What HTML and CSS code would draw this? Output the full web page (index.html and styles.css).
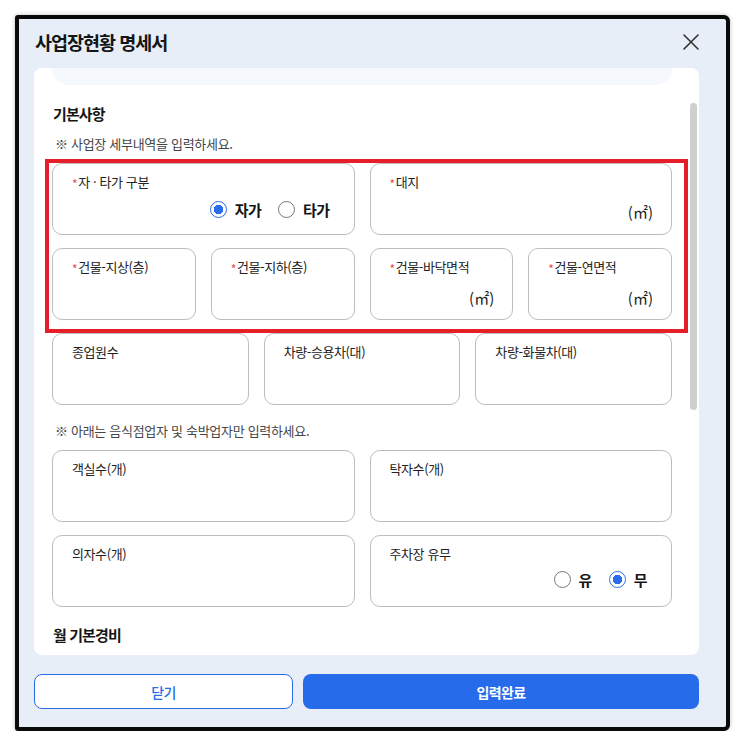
FILE: index.html
```html
<!DOCTYPE html>
<html lang="ko">
<head>
<meta charset="utf-8">
<title>사업장현황 명세서</title>
<link rel="stylesheet" href="styles.css">
</head>
<body>
<div class="frame">
  <header class="dialog-head">
    <h1 class="dialog-title">사업장현황 명세서</h1>
    <button class="close" type="button" aria-label="닫기">
      <svg width="16" height="16" viewBox="0 0 16 16"><path d="M1 1 L15 15 M15 1 L1 15" stroke="#333" stroke-width="1.6" stroke-linecap="round" fill="none"/></svg>
    </button>
  </header>

  <main class="panel">
    <div class="scroll">
      <div class="prev-card"></div>

      <h2 class="section-title">기본사항</h2>
      <p class="hint">※ 사업장 세부내역을 입력하세요.</p>

      <div class="row cols-2">
        <div class="field">
          <div class="label"><span class="req">*</span>자 · 타가 구분</div>
          <div class="value radios">
            <label class="radio"><span class="dot on"></span>자가</label>
            <label class="radio"><span class="dot"></span>타가</label>
          </div>
        </div>
        <div class="field">
          <div class="label"><span class="req">*</span>대지</div>
          <div class="value unit">(㎡)</div>
        </div>
      </div>

      <div class="row cols-4">
        <div class="field"><div class="label"><span class="req">*</span>건물-지상(층)</div></div>
        <div class="field"><div class="label"><span class="req">*</span>건물-지하(층)</div></div>
        <div class="field">
          <div class="label"><span class="req">*</span>건물-바닥면적</div>
          <div class="value unit low">(㎡)</div>
        </div>
        <div class="field">
          <div class="label"><span class="req">*</span>건물-연면적</div>
          <div class="value unit low">(㎡)</div>
        </div>
      </div>

      <div class="row cols-3">
        <div class="field"><div class="label">종업원수</div></div>
        <div class="field"><div class="label">차량-승용차(대)</div></div>
        <div class="field"><div class="label">차량-화물차(대)</div></div>
      </div>

      <p class="hint hint-mid">※ 아래는 음식점업자 및 숙박업자만 입력하세요.</p>

      <div class="row cols-2">
        <div class="field"><div class="label">객실수(개)</div></div>
        <div class="field"><div class="label">탁자수(개)</div></div>
      </div>

      <div class="row cols-2">
        <div class="field"><div class="label">의자수(개)</div></div>
        <div class="field">
          <div class="label">주차장 유무</div>
          <div class="value radios">
            <label class="radio"><span class="dot"></span>유</label>
            <label class="radio"><span class="dot on"></span>무</label>
          </div>
        </div>
      </div>

      <h2 class="section-title section-next">월 기본경비</h2>
    </div>

    <div class="scrollbar"></div>
    <div class="highlight"></div>
  </main>

  <footer class="actions">
    <button class="btn btn-outline" type="button">닫기</button>
    <button class="btn btn-primary" type="button">입력완료</button>
  </footer>
</div>
</body>
</html>
```

FILE: styles.css
```css
* { box-sizing: border-box; }

html, body {
  margin: 0;
  padding: 0;
  background: #ffffff;
}

body {
  font-family: "Noto Sans CJK KR", "Noto Sans", sans-serif;
  color: #1a1a1a;
}

/* dialog window */
.frame {
  margin: 15px 0 0 15px;
  width: 715px;
  height: 716px;
  border: 4px solid #0a0a0a;
  border-radius: 3px 6px 6px 3px;
  background: #e7eef8;
  padding: 0 27px 0 15px;
  display: flex;
  flex-direction: column;
  box-shadow: 0 0 4px rgba(0, 0, 0, 0.25);
}

.dialog-head {
  height: 49px;
  display: flex;
  align-items: center;
  justify-content: space-between;
  padding: 0 0 3px 1px;
}

.dialog-title {
  margin: 0;
  font-size: 18.5px;
  font-weight: 700;
  letter-spacing: -1px;
  color: #151515;
}

.close {
  border: 0;
  background: none;
  padding: 0;
  width: 16px;
  height: 16px;
  display: flex;
}

/* white scroll panel */
.panel {
  position: relative;
  height: 587px;
  background: #ffffff;
  border-radius: 8px;
  overflow: hidden;
}

.scroll {
  padding: 0 27px 0 18px;
}

.prev-card {
  height: 17px;
  background: #f5f8fd;
  border-radius: 0 0 16px 16px;
}

.section-title {
  margin: 19px 0 0 1px;
  font-size: 15px;
  line-height: 20px;
  font-weight: 700;
  letter-spacing: -0.9px;
  color: #151515;
}

.section-next {
  margin-top: 18px;
}

.hint {
  margin: 11px 0 0 3px;
  font-size: 13px;
  line-height: 18px;
  letter-spacing: -0.3px;
  color: #454545;
}

.hint-mid {
  margin-top: 17px;
}

/* field grid */
.row {
  display: grid;
  gap: 15px;
  margin-top: 13px;
}

.hint + .row { margin-top: 10px; }

.cols-2 { grid-template-columns: repeat(2, 1fr); }
.cols-3 { grid-template-columns: repeat(3, 1fr); }
.cols-4 { grid-template-columns: repeat(4, 1fr); }

.field {
  height: 72px;
  border: 1px solid #bdbdbd;
  border-radius: 10px;
  padding: 9px 24px 0 19px;
  display: flex;
  flex-direction: column;
}

.label {
  font-size: 13px;
  line-height: 18px;
  letter-spacing: -0.4px;
  color: #222;
}

.req {
  color: #ea4a52;
  font-size: 12px;
  margin-right: 1px;
  vertical-align: -2px;
}

.value {
  display: flex;
  justify-content: flex-end;
  align-items: center;
  height: 22px;
  margin-top: 5px;
}

.unit {
  font-size: 15px;
  color: #222;
  margin-right: -6px;
  margin-top: 7px;
}

.unit.low {
  margin-top: 8px;
}

/* radio group */
.radios {
  gap: 17px;
}

.radio {
  display: flex;
  align-items: center;
  gap: 8px;
  font-size: 15px;
  font-weight: 700;
  letter-spacing: -0.6px;
  color: #151515;
}

.dot {
  width: 17px;
  height: 17px;
  border-radius: 50%;
  border: 1px solid #777;
  background: #fff;
  display: inline-block;
}

.dot.on {
  border: 1.5px solid #2a6de8;
  background: radial-gradient(circle, #2a6de8 0 4.5px, #fff 5px);
}

/* overlays on the panel */
.scrollbar {
  position: absolute;
  left: 656px;
  top: 35px;
  width: 7px;
  height: 307px;
  border-radius: 4px;
  background: #cfcfcf;
}

.highlight {
  position: absolute;
  left: 11px;
  top: 91px;
  width: 643px;
  height: 174px;
  border: 4px solid #e61e28;
  pointer-events: none;
}

/* footer buttons */
.actions {
  margin-top: 19px;
  display: grid;
  grid-template-columns: 259px 1fr;
  gap: 10px;
}

.btn {
  height: 35px;
  border-radius: 8px;
  font-family: inherit;
  font-size: 14px;
  letter-spacing: -0.6px;
}

.btn-outline {
  background: #ffffff;
  border: 1px solid #2a6de8;
  color: #2a6de8;
  font-weight: 500;
}

.btn-primary {
  background: #256bea;
  border: 0;
  color: #ffffff;
  font-weight: 700;
}
```
